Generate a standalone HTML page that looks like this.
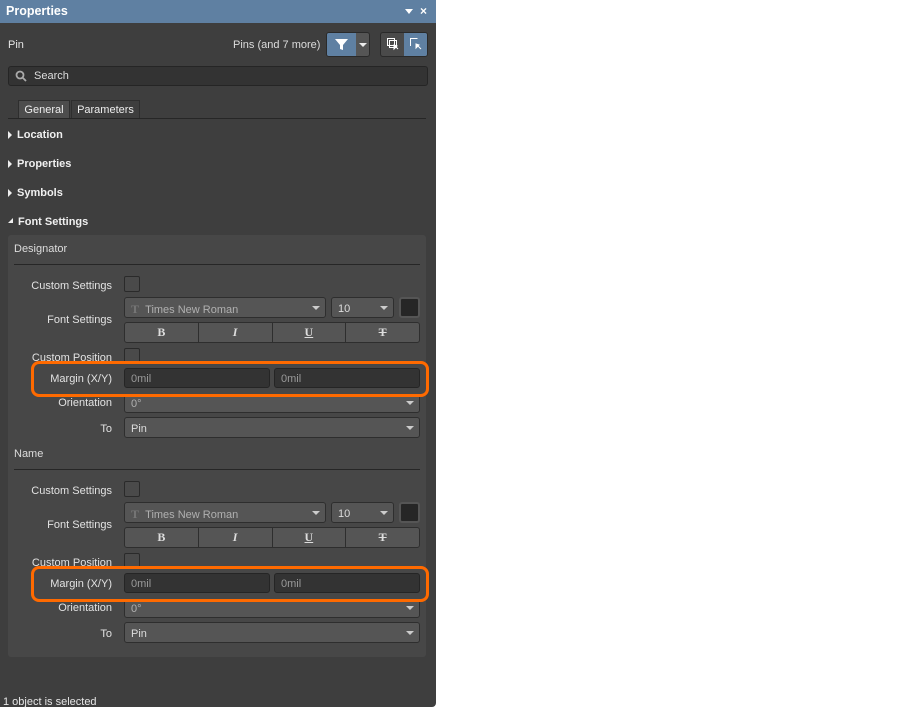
<!DOCTYPE html>
<html><head><meta charset="utf-8"><style>
*{box-sizing:border-box;margin:0;padding:0}
body{width:920px;height:720px;background:#fff;position:relative;overflow:hidden;font-family:"Liberation Sans",sans-serif;font-size:11px;color:#e6e6e6}
.a{position:absolute}
.panel{left:0;top:0;width:436px;height:707px;background:#3e3e3e;border-bottom-right-radius:4px}
.hdr{left:0;top:0;width:436px;height:23px;background:#5f80a2;color:#fff;font-weight:bold;font-size:12.5px;padding:4px 0 0 6px}
.lbl{text-align:right;width:112px;left:0;color:#e2e2e2;line-height:14px;padding-top:1px}
.cb{width:16px;height:16px;border:1px solid #2a2a2a;background:#4a4a4a;border-radius:2px}
.cmb{background:#555;border:1px solid #2e2e2e;border-radius:3px;height:21px;color:#b0b0b0;padding:4px 0 0 6px;line-height:14px}
.cmb .ar{position:absolute;right:5px;top:8px;width:0;height:0;border-left:4px solid transparent;border-right:4px solid transparent;border-top:4px solid #ccc}
.inp{background:#333;border:1px solid #252525;border-radius:3px;height:20px;color:#999;padding:3px 0 0 6px;line-height:14px}
.seg{background:#555;border:1px solid #2e2e2e;border-radius:3px;height:21px;display:flex}
.seg div{flex:1;border-right:1px solid #2e2e2e;text-align:center;color:#ddd;font-weight:bold;font-family:"Liberation Serif",serif;font-size:12px;line-height:19px}
.seg div:last-child{border-right:none}
.sec{font-weight:bold;color:#f0f0f0;left:17px}
.tri{left:8px;width:0;height:0;border-top:4px solid transparent;border-bottom:4px solid transparent;border-left:4px solid #eee}
.box{border:3px solid #ff6a00;border-radius:8px}
</style></head><body>
<div class="a panel"></div>
<div class="a hdr">Properties</div>
<div class="a" style="left:405px;top:9px;border-left:4px solid transparent;border-right:4px solid transparent;border-top:5px solid #fff"></div>
<div class="a" style="left:420px;top:4px;color:#fff;font-weight:bold;font-size:12px">×</div>

<div class="a" style="left:8px;top:39px">Pin</div>
<div class="a" style="left:233px;top:39px;color:#ddd">Pins (and 7 more)</div>
<div class="a" style="left:326px;top:32px;width:44px;height:25px;border:1px solid #2a2a2a;border-radius:3px;background:#555;overflow:hidden">
 <div class="a" style="left:0;top:0;width:29px;height:23px;background:#5f80a2"></div>
 <svg class="a" style="left:8px;top:5px" width="13" height="13" viewBox="0 0 13 13"><path d="M0 1h13L8 7v5L5 11V7z" fill="#fff"/></svg>
 <div class="a" style="left:32px;top:10px;border-left:4px solid transparent;border-right:4px solid transparent;border-top:4px solid #eee"></div>
</div>
<div class="a" style="left:380px;top:32px;width:48px;height:25px;border:1px solid #2a2a2a;border-radius:3px;background:#4a4a4a;overflow:hidden">
 <div class="a" style="left:23px;top:0;width:24px;height:23px;background:#5f80a2"></div>
 <svg class="a" style="left:5px;top:4px" width="14" height="14" viewBox="0 0 14 14" fill="none" stroke="#fff"><rect x="1.5" y="1.5" width="7" height="7"/><rect x="3.5" y="3.5" width="7" height="7"/><path d="M8 8l4 4M8 8v4l3-3z" fill="#fff"/></svg>
 <svg class="a" style="left:28px;top:4px" width="14" height="14" viewBox="0 0 14 14" fill="none" stroke="#fff"><path d="M1.5 9V1.5h7"/><path d="M7 7l5 5M7 7v4l3-3z" fill="#fff"/></svg>
</div>

<div class="a" style="left:8px;top:66px;width:420px;height:20px;background:#333;border:1px solid #252525;border-radius:3px"></div>
<svg class="a" style="left:15px;top:70px" width="12" height="12" viewBox="0 0 12 12" fill="none" stroke="#aaa" stroke-width="1.8"><circle cx="5" cy="5" r="3.5"/><path d="M7.5 7.5l3.5 3.5"/></svg>
<div class="a" style="left:34px;top:70px;color:#ddd">Search</div>

<div class="a" style="left:18px;top:100px;width:52px;height:19px;background:#4d4d4d;border:1px solid #2e2e2e;border-bottom:none;text-align:center;padding-top:3px;color:#eee">General</div>
<div class="a" style="left:71px;top:100px;width:69px;height:19px;background:#3e3e3e;border:1px solid #2e2e2e;border-bottom:none;text-align:center;padding-top:3px;color:#eee">Parameters</div>
<div class="a" style="left:8px;top:118px;width:418px;height:1px;background:#262626"></div>

<div class="a tri" style="top:131px"></div><div class="a sec" style="top:129px">Location</div>
<div class="a tri" style="top:160px"></div><div class="a sec" style="top:158px">Properties</div>
<div class="a tri" style="top:189px"></div><div class="a sec" style="top:187px">Symbols</div>
<div class="a" style="left:8px;top:218px;border-left:5px solid transparent;border-bottom:5px solid #eee"></div><div class="a sec" style="top:216px;left:18px">Font Settings</div>

<div class="a" style="left:8px;top:235px;width:418px;height:422px;background:#474747;border-radius:3px"></div>

<!-- block 1 -->
<div class="a" style="left:0;top:0;width:436px">
<div class="a" style="left:14px;top:243px;color:#ddd">Designator</div>
<div class="a" style="left:14px;top:264px;width:406px;height:1px;background:#262626"></div>
<div class="a lbl" style="top:278px">Custom Settings</div>
<div class="a cb" style="left:124px;top:276px"></div>
<div class="a lbl" style="top:312px">Font Settings</div>
<div class="a cmb" style="left:124px;top:297px;width:202px"><span style="font-family:'Liberation Serif',serif;color:#777;font-weight:bold;font-size:12px">T</span>&nbsp;&nbsp;Times New Roman<span class="ar"></span></div>
<div class="a cmb" style="left:331px;top:297px;width:63px;color:#ddd">10<span class="ar"></span></div>
<div class="a" style="left:399px;top:297px;width:21px;height:21px;background:#262626;border:2px solid #555;border-radius:3px"></div>
<div class="a seg" style="left:124px;top:322px;width:296px"><div>B</div><div style="font-style:italic">I</div><div style="text-decoration:underline">U</div><div style="text-decoration:line-through">T</div></div>
<div class="a lbl" style="top:350px">Custom Position</div>
<div class="a cb" style="left:124px;top:348px"></div>
<div class="a cmb" style="left:124px;top:392px;width:296px">0°<span class="ar"></span></div>
<div class="a lbl" style="top:395px">Orientation</div>
<div class="a lbl" style="top:421px">To</div>
<div class="a cmb" style="left:124px;top:417px;width:296px;color:#ddd">Pin<span class="ar"></span></div>
<div class="a" style="left:33px;top:363px;width:393px;height:31px;background:#474747"></div>
<div class="a lbl" style="top:371px">Margin (X/Y)</div>
<div class="a inp" style="left:124px;top:368px;width:146px">0mil</div>
<div class="a inp" style="left:274px;top:368px;width:146px">0mil</div>
<div class="a box" style="left:31px;top:361px;width:398px;height:36px"></div>
</div>

<!-- block 2 -->
<div class="a" style="left:0;top:205px;width:436px">
<div class="a" style="left:14px;top:243px;color:#ddd">Name</div>
<div class="a" style="left:14px;top:264px;width:406px;height:1px;background:#262626"></div>
<div class="a lbl" style="top:278px">Custom Settings</div>
<div class="a cb" style="left:124px;top:276px"></div>
<div class="a lbl" style="top:312px">Font Settings</div>
<div class="a cmb" style="left:124px;top:297px;width:202px"><span style="font-family:'Liberation Serif',serif;color:#777;font-weight:bold;font-size:12px">T</span>&nbsp;&nbsp;Times New Roman<span class="ar"></span></div>
<div class="a cmb" style="left:331px;top:297px;width:63px;color:#ddd">10<span class="ar"></span></div>
<div class="a" style="left:399px;top:297px;width:21px;height:21px;background:#262626;border:2px solid #555;border-radius:3px"></div>
<div class="a seg" style="left:124px;top:322px;width:296px"><div>B</div><div style="font-style:italic">I</div><div style="text-decoration:underline">U</div><div style="text-decoration:line-through">T</div></div>
<div class="a lbl" style="top:350px">Custom Position</div>
<div class="a cb" style="left:124px;top:348px"></div>
<div class="a cmb" style="left:124px;top:392px;width:296px">0°<span class="ar"></span></div>
<div class="a lbl" style="top:395px">Orientation</div>
<div class="a lbl" style="top:421px">To</div>
<div class="a cmb" style="left:124px;top:417px;width:296px;color:#ddd">Pin<span class="ar"></span></div>
<div class="a" style="left:33px;top:363px;width:393px;height:31px;background:#474747"></div>
<div class="a lbl" style="top:371px">Margin (X/Y)</div>
<div class="a inp" style="left:124px;top:368px;width:146px">0mil</div>
<div class="a inp" style="left:274px;top:368px;width:146px">0mil</div>
<div class="a box" style="left:31px;top:361px;width:398px;height:36px"></div>
</div>

<div class="a" style="left:3px;top:696px;color:#e6e6e6">1 object is selected</div>
</body></html>
